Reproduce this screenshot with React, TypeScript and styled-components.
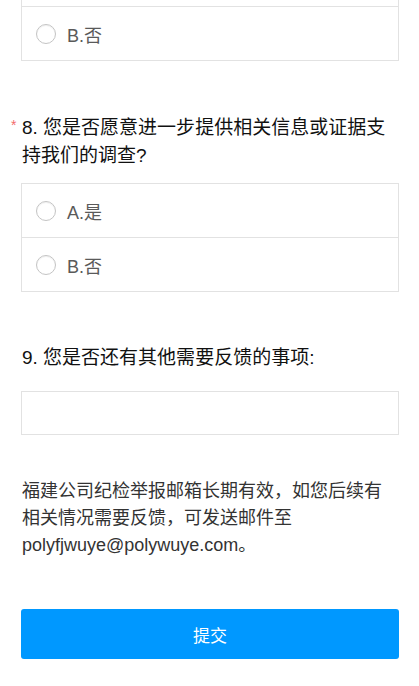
import React from "react"
import styled, { createGlobalStyle } from "styled-components"

const GlobalStyle = createGlobalStyle`
  body {
    margin: 0;
    background: #fff;
    font-family: "Liberation Sans", "Noto Sans CJK SC", sans-serif;
  }
`

const options = ["A.是", "B.否"]

const App = () => {
  return (
    <>
      <GlobalStyle />
      <Page>
        {/* tail of question 7, scrolled mostly out of view */}
        <OptionList $open>
          <RowTail />
          <OptionRow>
            <Radio />
            <OptionText>B.否</OptionText>
          </OptionRow>
        </OptionList>

        <Question $gap={53} $required>
          8. 您是否愿意进一步提供相关信息或证据支
          <br />
          持我们的调查?
        </Question>
        <OptionList $offset={13}>
          {options.map((o) => (
            <OptionRow key={o}>
              <Radio />
              <OptionText>{o}</OptionText>
            </OptionRow>
          ))}
        </OptionList>

        <Question $gap={52}>9. 您是否还有其他需要反馈的事项:</Question>
        <TextInput type="text" />

        <Notice>
          福建公司纪检举报邮箱长期有效，如您后续有相关情况需要反馈，可发送邮件至polyfjwuye@polywuye.com。
        </Notice>

        <SubmitButton type="button">提交</SubmitButton>
      </Page>
    </>
  )
}

export default App

const Page = styled.div`
  padding: 0 20px 27px 21px;
`
const OptionList = styled.div<{ $offset?: number; $open?: boolean }>`
  margin-top: ${(p) => p.$offset ?? 0}px;
  border: 1px solid #e2e2e2;
  border-top: ${(p) => (p.$open ? "none" : "1px solid #e2e2e2")};
  display: flex;
  flex-direction: column;
`
const RowTail = styled.div`
  height: 6px;
  border-bottom: 1px solid #e2e2e2;
`
const OptionRow = styled.div`
  height: 53px;
  display: flex;
  align-items: center;
  gap: 11px;
  padding-left: 14px;

  & + & {
    border-top: 1px solid #e2e2e2;
  }
`
const Radio = styled.span`
  width: 18px;
  height: 18px;
  border-radius: 50%;
  border: 1px solid #c4c4c4;
  box-shadow: inset 0 1px 1px rgba(0, 0, 0, 0.06);
  background: #fff;
`
const OptionText = styled.span`
  font-size: 18px;
  color: #5a5a5a;
`
const Question = styled.div<{ $gap: number; $required?: boolean }>`
  position: relative;
  margin-top: ${(p) => p.$gap}px;
  padding-left: 1px;
  font-size: 19px;
  line-height: 28px;
  color: #111;

  &::before {
    content: ${(p) => (p.$required ? '"*"' : "none")};
    position: absolute;
    left: -10px;
    top: 0;
    font-size: 14px;
    line-height: 22px;
    color: #f36b6b;
  }
`
const TextInput = styled.input`
  display: block;
  box-sizing: border-box;
  width: 100%;
  height: 44px;
  margin: 19px 0 0;
  border: 1px solid #e2e2e2;
  outline: none;
  padding: 0 12px;
  font: inherit;
`
const Notice = styled.p`
  margin: 43px 0 0;
  padding: 0 1px;
  font-size: 18px;
  line-height: 27px;
  color: #333;
`
const SubmitButton = styled.button`
  display: block;
  width: 100%;
  height: 50px;
  margin-top: 50px;
  border: none;
  border-radius: 3px;
  background: #0098ff;
  color: #fff;
  font-family: inherit;
  font-size: 17px;
`
